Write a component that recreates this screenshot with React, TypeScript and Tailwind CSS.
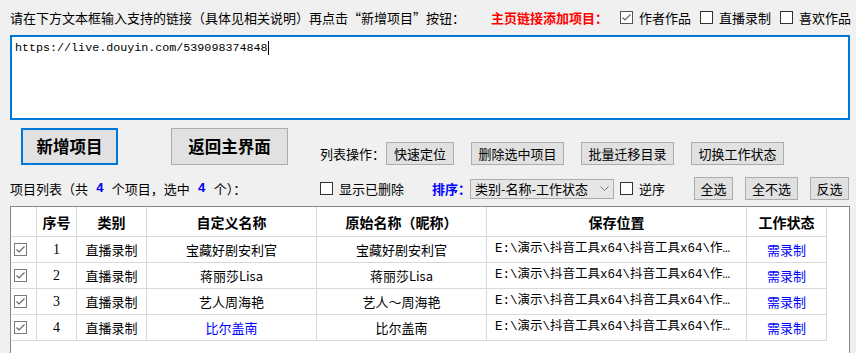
import React from 'react'

const cjk = "font-['Noto_Sans_CJK_SC',sans-serif]"
const mono = "font-['Liberation_Mono','Noto_Sans_CJK_SC',monospace]"

function Box({ checked, tone = 'dark' }: { checked?: boolean; tone?: 'dark' | 'gray' }) {
  const border = tone === 'gray' ? 'border-[#7a7a7a]' : checked ? 'border-[#555555]' : 'border-[#333333]'
  return (
    <span className={`inline-flex w-[13px] h-[13px] shrink-0 items-center justify-center border bg-white ${border}`}>
      {checked && (
        <svg width="11" height="11" viewBox="0 0 11 11">
          <polyline points="1.5,5.5 4,8 9.5,2.5" fill="none" stroke="#666" strokeWidth="1.2" />
        </svg>
      )}
    </span>
  )
}

function CheckLabel({ checked, label, className = '' }: { checked?: boolean; label: string; className?: string }) {
  return (
    <span className={`flex shrink-0 items-center gap-[6px] whitespace-nowrap ${className}`}>
      <Box checked={checked} />
      <span>{label}</span>
    </span>
  )
}

function Btn({ label, w, className = '' }: { label: string; w: string; className?: string }) {
  return (
    <button className={`h-[23px] shrink-0 ${w} border border-[#adadad] bg-[#e1e1e1] text-[13px] leading-none whitespace-nowrap ${className}`}>
      {label}
    </button>
  )
}

const rows = [
  { no: 1, name: '宝藏好剧安利官', raw: '宝藏好剧安利官', blue: false },
  { no: 2, name: '蒋丽莎Lisa', raw: '蒋丽莎Lisa', blue: false },
  { no: 3, name: '艺人周海艳', raw: '艺人～周海艳', blue: false },
  { no: 4, name: '比尔盖南', raw: '比尔盖南', blue: true },
]

const cols = 'grid grid-cols-[26px_40px_70px_170px_170px_260px_80px]'
const cell = 'border-r border-b border-[#d9d9d9] flex items-center justify-center whitespace-nowrap'

export default function App() {
  return (
    <div className={`w-[856px] h-[353px] overflow-hidden bg-[#f0f0f0] text-[13px] text-black flex flex-col ${cjk}`}>
      {/* 顶部说明 */}
      <div className="h-[35px] shrink-0 pl-[10px] pb-[1px] flex items-center leading-none whitespace-nowrap">
        <span className="w-[481px] shrink-0">请在下方文本框输入支持的链接（具体见相关说明）再点击“新增项目”按钮：</span>
        <span className="w-[129px] shrink-0 font-bold text-[#ff0000]">主页链接添加项目：</span>
        <CheckLabel checked label="作者作品" className="w-[80px]" />
        <CheckLabel label="直播录制" className="w-[80px]" />
        <CheckLabel label="喜欢作品" />
      </div>

      {/* 链接输入框 */}
      <div className="ml-[10px] w-[840px] h-[85px] shrink-0 border-2 border-[#0078d7] bg-white pl-[3px] pt-[3px]">
        <div className={`flex items-center text-[11.7px] leading-[16px] ${mono}`}>
          <span>https://live.douyin.com/539098374848</span>
          <span className="inline-block w-px h-[14px] bg-black" />
        </div>
      </div>

      {/* 按钮行 */}
      <div className="mt-[8px] h-[37px] shrink-0 flex items-end">
        <button className="ml-[21px] w-[97px] h-[37px] shrink-0 border-2 border-[#0078d7] bg-[#e1e1e1] text-[16.5px] font-bold leading-none">
          新增项目
        </button>
        <button className="ml-[53px] w-[117px] h-[37px] shrink-0 border border-[#adadad] bg-[#e1e1e1] text-[16.5px] font-bold leading-none">
          返回主界面
        </button>
        <span className="ml-[32px] w-[66px] shrink-0 h-[23px] flex items-center leading-none whitespace-nowrap">列表操作：</span>
        <Btn label="快速定位" w="w-[68px]" />
        <Btn label="删除选中项目" w="w-[93px]" className="ml-[17px]" />
        <Btn label="批量迁移目录" w="w-[93px]" className="ml-[17px]" />
        <Btn label="切换工作状态" w="w-[93px]" className="ml-[17px]" />
      </div>

      {/* 列表工具行 */}
      <div className="mt-[12px] h-[23px] shrink-0 flex items-center leading-none whitespace-nowrap">
        <span className="ml-[10px] w-[310px] shrink-0 flex items-center">
          项目列表（共<b className={`mx-[8px] text-[#0000ff] ${mono}`}>4</b>个项目，选中<b className={`mx-[8px] text-[#0000ff] ${mono}`}>4</b>个）：
        </span>
        <CheckLabel label="显示已删除" className="w-[112px]" />
        <span className="w-[38px] shrink-0 font-bold text-[#0000ff]">排序：</span>
        <div className="w-[144px] h-[20px] shrink-0 border border-[#acacac] bg-[#e6e6e6] flex items-center pl-[4px] pr-[4px]">
          <span className="flex-1">类别-名称-工作状态</span>
          <svg width="9" height="6" viewBox="0 0 9 6">
            <polyline points="0.5,0.5 4.5,4.5 8.5,0.5" fill="none" stroke="#777" strokeWidth="1" />
          </svg>
        </div>
        <CheckLabel label="逆序" className="ml-[6px] w-[74px]" />
        <Btn label="全选" w="w-[39px]" />
        <Btn label="全不选" w="w-[53px]" className="ml-[12px]" />
        <Btn label="反选" w="w-[39px]" className="ml-[12px]" />
      </div>

      {/* 项目表格 */}
      <div className="mt-[6px] ml-[10px] w-[840px] h-[200px] shrink-0 border border-[#828790] bg-white">
        <div className={`${cols} h-[30px] font-bold text-[14px] leading-none`}>
          <div className={cell} />
          <div className={cell}>序号</div>
          <div className={cell}>类别</div>
          <div className={cell}>自定义名称</div>
          <div className={cell}>原始名称（昵称）</div>
          <div className={cell}>保存位置</div>
          <div className={cell}>工作状态</div>
        </div>
        {rows.map((r) => (
          <div key={r.no} className={`${cols} h-[26px] leading-none`}>
            <div className={`${cell} justify-start pl-[3px]`}>
              <Box checked tone="gray" />
            </div>
            <div className={`${cell} font-['Liberation_Serif',serif] text-[14px]`}>{r.no}</div>
            <div className={cell}>直播录制</div>
            <div className={`${cell} ${r.blue ? 'text-[#0000ff]' : ''}`}>{r.name}</div>
            <div className={cell}>{r.raw}</div>
            <div className={`${cell} justify-start pl-[8px] text-[12.5px] ${mono}`}>
              E:\演示\抖音工具x64\抖音工具x64\作…
            </div>
            <div className={`${cell} text-[#0000ff]`}>需录制</div>
          </div>
        ))}
      </div>
    </div>
  )
}
